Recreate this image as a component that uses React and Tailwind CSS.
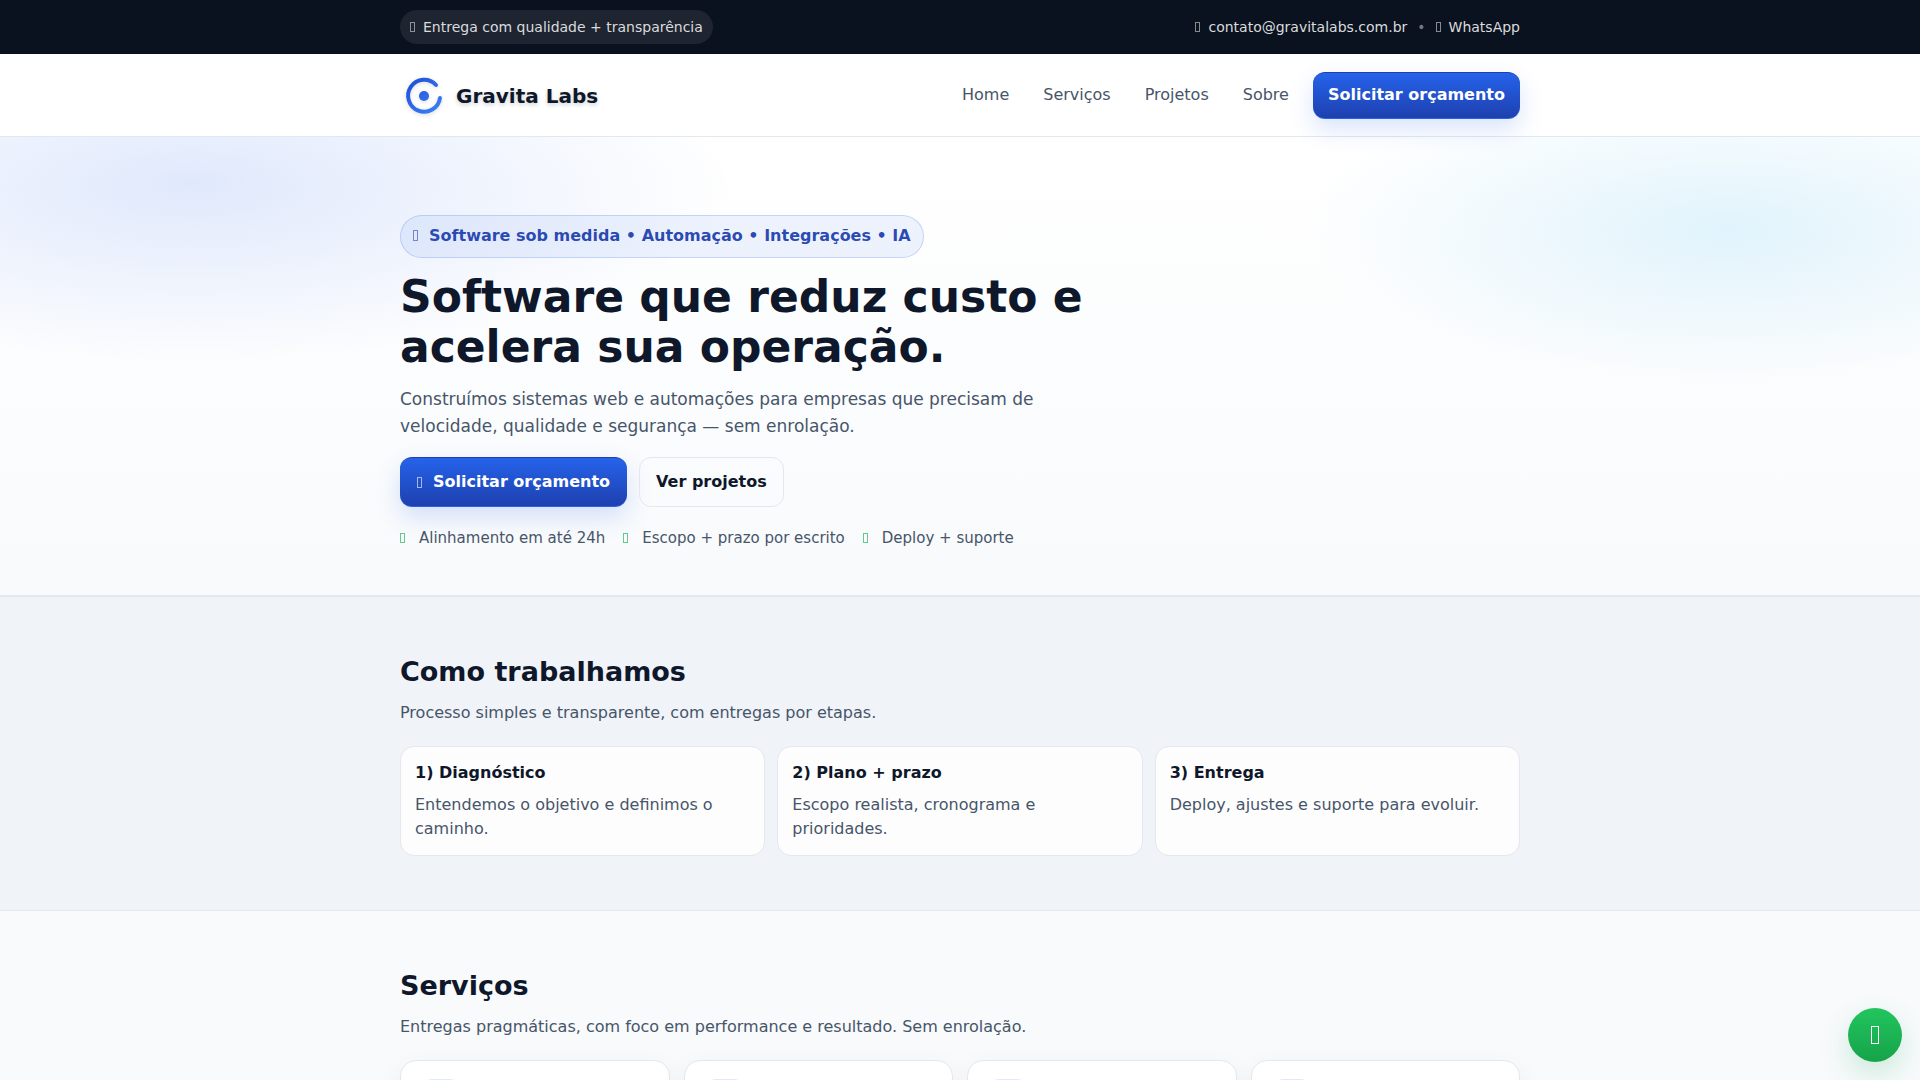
import React from 'react';

const NAV = ['Home', 'Serviços', 'Projetos', 'Sobre'];

const CHECKS = ['Alinhamento em até 24h', 'Escopo + prazo por escrito', 'Deploy + suporte'];

const STEPS = [
  { title: '1) Diagnóstico', text: 'Entendemos o objetivo e definimos o caminho.' },
  { title: '2) Plano + prazo', text: 'Escopo realista, cronograma e prioridades.' },
  { title: '3) Entrega', text: 'Deploy, ajustes e suporte para evoluir.' },
];

const SERVICES = ['web', 'automacao', 'integracoes', 'ia'];

// Thin outlined box used as the icon glyph
function Glyph({ className = 'w-[5px] h-2.5' }) {
  return <span aria-hidden="true" className={`inline-block shrink-0 border border-current ${className}`} />;
}

function Logo() {
  return (
    <svg width="48" height="48" viewBox="0 0 48 48" fill="none" className="drop-shadow-sm" aria-hidden="true">
      <defs>
        <linearGradient id="logo" x1="8" y1="6" x2="40" y2="42" gradientUnits="userSpaceOnUse">
          <stop stopColor="#1d4ed8" />
          <stop offset="1" stopColor="#3b82f6" />
        </linearGradient>
      </defs>
      <path d="M36 13A16 16 0 1 0 40 26" stroke="url(#logo)" strokeWidth="4" strokeLinecap="round" />
      <circle cx="24" cy="24" r="5" fill="url(#logo)" />
    </svg>
  );
}

function Container({ className = '', children }) {
  return <div className={`mx-auto w-full max-w-[1160px] px-5 ${className}`}>{children}</div>;
}

function TopBar() {
  return (
    <div className="bg-[#0b121f] text-sm text-[#dadbdd]">
      <Container className="flex items-center justify-between py-2.5">
        <span className="flex h-[34px] items-center gap-2 rounded-full bg-[#1e2531] px-2.5">
          <Glyph className="w-[5px] h-2.5 opacity-60" />
          Entrega com qualidade + transparência
        </span>
        <div className="flex items-center gap-2.5">
          <a href="#email" className="flex items-center gap-2">
            <Glyph className="w-[5px] h-2.5 opacity-60" />
            contato@gravitalabs.com.br
          </a>
          <span className="opacity-50">•</span>
          <a href="#whatsapp" className="flex items-center gap-2">
            <Glyph className="w-[5px] h-2.5 opacity-60" />
            WhatsApp
          </a>
        </div>
      </Container>
    </div>
  );
}

function Header() {
  return (
    <header className="relative z-10 border-b border-[#e2e8f0] bg-white">
      <Container className="flex h-[82px] items-center justify-between">
        <a
          href="#home"
          className="flex items-center gap-2 pt-0.5 text-xl font-bold text-[#0f172a] [text-shadow:0_2px_4px_rgba(15,23,42,0.2)]"
        >
          <Logo />
          Gravita Labs
        </a>
        <nav className="flex items-center">
          {NAV.map((item) => (
            <a key={item} href={`#${item}`} className="mr-[34px] last-of-type:mr-6 text-[#475569]">
              {item}
            </a>
          ))}
          <button className="h-[47px] rounded-xl border-y border-t-[#1e40af] border-b-[#2563eb] bg-linear-to-b from-[#2563eb] to-[#1e40af] px-[15px] font-bold text-white shadow-[0_10px_25px_rgba(37,99,235,0.18)]">
            Solicitar orçamento
          </button>
        </nav>
      </Container>
    </header>
  );
}

function Hero() {
  return (
    <section className="border-b border-[#e2e8f0] bg-[radial-gradient(900px_300px_at_10%_10%,rgba(37,99,235,0.14),transparent_60%),radial-gradient(700px_260px_at_90%_20%,rgba(14,165,233,0.12),transparent_60%),linear-gradient(180deg,#ffffff,#f8fafc)]">
      <Container className="flex flex-col items-start pt-[78px] pb-[45px]">
        <p className="flex h-[43px] items-center gap-[11px] rounded-full border border-[#2563eb]/20 bg-[#2563eb]/8 px-3 pb-0.5 font-bold text-[#1e40af]/95">
          <Glyph className="w-[5px] h-[11px] opacity-60" />
          Software sob medida • Automação • Integrações • IA
        </p>
        <h1 className="mt-3.5 max-w-[720px] text-[44px] leading-[50px] font-bold text-[#0f172a]">
          Software que reduz custo e acelera sua operação.
        </h1>
        <p className="mt-3.5 max-w-[660px] text-[17px] leading-[27px] text-[#475569]">
          Construímos sistemas web e automações para empresas que precisam de velocidade, qualidade e segurança — sem
          enrolação.
        </p>
        <div className="mt-[17px] flex gap-3">
          <button className="flex h-[50px] items-center gap-[11px] rounded-xl border-y border-t-[#1e40af] border-b-[#2563eb] bg-linear-to-b from-[#2563eb] to-[#1e40af] px-[17px] font-bold text-white shadow-[0_10px_25px_rgba(37,99,235,0.18)]">
            <Glyph className="w-[5px] h-[11px] opacity-60" />
            Solicitar orçamento
          </button>
          <button className="h-[50px] rounded-xl border border-[#e2e8f0] px-4 font-bold text-[#0f172a]">
            Ver projetos
          </button>
        </div>
        <ul className="mt-[19px] flex gap-[18px] text-[15px] leading-6 text-[#475569]">
          {CHECKS.map((check) => (
            <li key={check} className="flex items-center gap-3.5">
              <Glyph className="w-[5px] h-2.5 text-[#22b55e] opacity-70" />
              {check}
            </li>
          ))}
        </ul>
      </Container>
    </section>
  );
}

function SectionHead({ title, text }) {
  return (
    <>
      <h2 className="text-[27px] leading-8 font-bold text-[#0f172a]">{title}</h2>
      <p className="mt-[13px] leading-6 text-[#475569]">{text}</p>
    </>
  );
}

function Process() {
  return (
    <section className="border-y border-[#e2e8f0] bg-[#f0f3f8]">
      <Container className="pt-[59px] pb-[54px]">
        <SectionHead title="Como trabalhamos" text="Processo simples e transparente, com entregas por etapas." />
        <div className="mt-[21px] grid grid-cols-3 gap-3">
          {STEPS.map((step) => (
            <article key={step.title} className="rounded-[14px] border border-[#e2e8f0] bg-[#fdfdfe] p-3.5">
              <h3 className="leading-6 font-bold text-[#0f172a]">{step.title}</h3>
              <p className="mt-2 leading-6 text-[#475569]">{step.text}</p>
            </article>
          ))}
        </div>
      </Container>
    </section>
  );
}

function Services() {
  return (
    <section className="bg-[#f8fafc]">
      <Container className="pt-[59px] pb-[54px]">
        <SectionHead title="Serviços" text="Entregas pragmáticas, com foco em performance e resultado. Sem enrolação." />
        <div className="mt-[21px] grid grid-cols-4 gap-3.5">
          {SERVICES.map((service) => (
            <article
              key={service}
              className="h-52 rounded-2xl border border-[#e2e8f0] bg-white p-[18px] shadow-[0_10px_30px_rgba(2,6,23,0.06)]"
            >
              <div className="size-11 rounded-[14px] border border-[#2563eb]/5 bg-[#2563eb]/10" />
            </article>
          ))}
        </div>
      </Container>
    </section>
  );
}

export default function App() {
  return (
    <div className="font-['DejaVu_Sans',sans-serif] text-base">
      <TopBar />
      <Header />
      <main>
        <Hero />
        <Process />
        <Services />
      </main>
      <a
        href="#whatsapp"
        aria-label="WhatsApp"
        className="fixed right-[18px] bottom-[18px] z-20 flex size-[54px] items-center justify-center rounded-full bg-linear-to-b from-[#22c55e] to-[#16a34a] text-white shadow-[0_12px_30px_rgba(22,163,74,0.2)]"
      >
        <Glyph className="w-2 h-[18px]" />
      </a>
    </div>
  );
}
